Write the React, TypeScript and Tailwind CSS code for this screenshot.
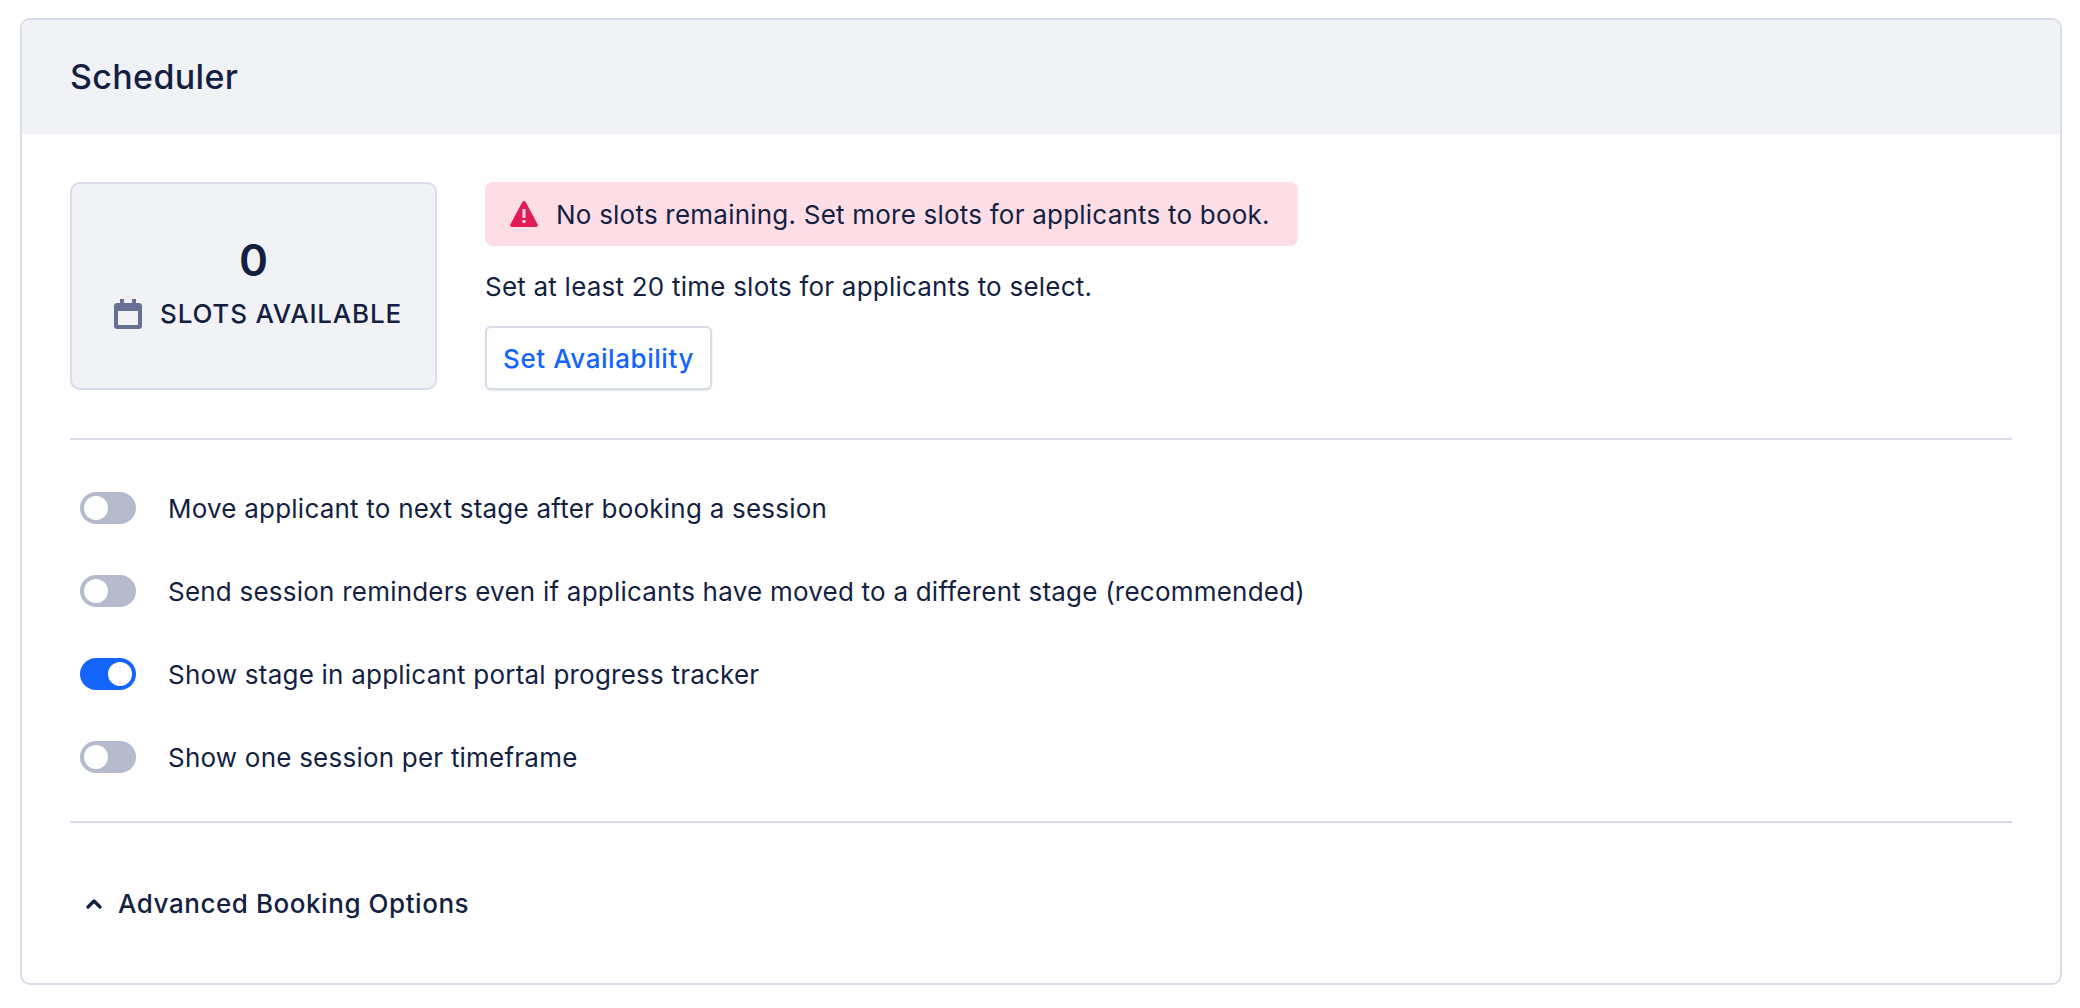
const options = [
  { id: "next-stage", label: "Move applicant to next stage after booking a session", on: false },
  { id: "reminders", label: "Send session reminders even if applicants have moved to a different stage (recommended)", on: false },
  { id: "portal", label: "Show stage in applicant portal progress tracker", on: true },
  { id: "timeframe", label: "Show one session per timeframe", on: false },
];

function Toggle({ on }: { on: boolean }) {
  return (
    <div
      className={`flex h-8 w-14 shrink-0 items-center rounded-full p-1 ${
        on ? "justify-end bg-[#1464ff]" : "justify-start bg-[#b5bacd]"
      }`}
    >
      <div className="h-6 w-6 rounded-full bg-white" />
    </div>
  );
}

export default function App() {
  return (
    <div className="h-[1008px] bg-white px-5 pt-[18px] font-['Inter',sans-serif] text-[26px] leading-8 tracking-[0.22px] text-[#141f42]">
      <div className="h-[967px] w-[2042px] overflow-hidden rounded-[10px] border-2 border-[#d8dbe8]">
        {/* Header */}
        <div className="flex h-[114px] items-center bg-[#f1f2f6] px-12">
          <h2 className="text-[34px] font-[550] tracking-[0.35px]">Scheduler</h2>
        </div>

        <div className="px-12 pt-12">
          {/* Slots + alert */}
          <div className="flex gap-12">
            <div className="flex h-[208px] w-[367px] flex-col items-center rounded-[10px] border-2 border-[#d8dbe8] bg-[#f1f2f6] pt-[46px]">
              <div className="text-[44px] font-semibold leading-[60px]">0</div>
              <div className="mt-[8px] flex items-center gap-[18px] pl-[9px]">
                <svg width="28" height="30" viewBox="0 0 28 30" fill="#667094">
                  <path
                    fillRule="evenodd"
                    d="M6 0h4v4h8V0h4v4h3a3 3 0 0 1 3 3v20a3 3 0 0 1-3 3H3a3 3 0 0 1-3-3V7a3 3 0 0 1 3-3h3V0zM4 12v14h20V12H4z"
                  />
                </svg>
                <span className="font-[550] tracking-[0.8px]">SLOTS AVAILABLE</span>
              </div>
            </div>

            <div className="flex flex-col items-start">
              <div className="flex h-16 w-[813px] items-center gap-[18px] rounded-[8px] bg-[#fddde6] pl-[25px]">
                <svg width="28" height="26" viewBox="0 0 28 26">
                  <path
                    fill="#e31c58"
                    fillRule="evenodd"
                    d="M14 0c.7 0 1.300.4 1.700 1l12 22.500c.6 1.200-.2 2.500-1.600 2.500H1.900C.5 26-.3 24.700.3 23.500L12.300 1c.4-.6 1-1 1.700-1zM12.500 8v9h3V8h-3zm0 11v3h3v-3h-3z"
                  />
                </svg>
                <span className="pt-0.5">No slots remaining. Set more slots for applicants to book.</span>
              </div>
              <p className="mt-[25px]">Set at least 20 time slots for applicants to select.</p>
              <button className="mt-[23px] h-16 w-[227px] rounded-[6px] border-2 border-[#d8dbe8] bg-white pt-0.5 font-[550] tracking-[0.55px] text-[#1464ff] shadow-[0_1px_2px_rgba(20,31,66,0.12)]">
                Set Availability
              </button>
            </div>
          </div>

          <div className="mt-12 h-0.5 bg-[#d8dbe8]" />

          {/* Toggles */}
          <div className="mt-[52px] flex flex-col gap-[51px] pl-2.5">
            {options.map((option) => (
              <div key={option.id} className="flex h-8 items-center gap-[32px]">
                <Toggle on={option.on} />
                <span className="pt-0.5">{option.label}</span>
              </div>
            ))}
          </div>

          <div className="mt-[48px] h-0.5 bg-[#d8dbe8]" />

          {/* Advanced */}
          <div className="mt-[65px] flex items-center gap-[16px] pl-4 font-[550] tracking-[0.55px]">
            <svg width="16" height="10" viewBox="0 0 16 10" fill="none" stroke="#141f42" strokeWidth="3.2" strokeLinecap="round" strokeLinejoin="round">
              <path d="M2 8l6-6 6 6" />
            </svg>
            <span>Advanced Booking Options</span>
          </div>
        </div>
      </div>
    </div>
  );
}
